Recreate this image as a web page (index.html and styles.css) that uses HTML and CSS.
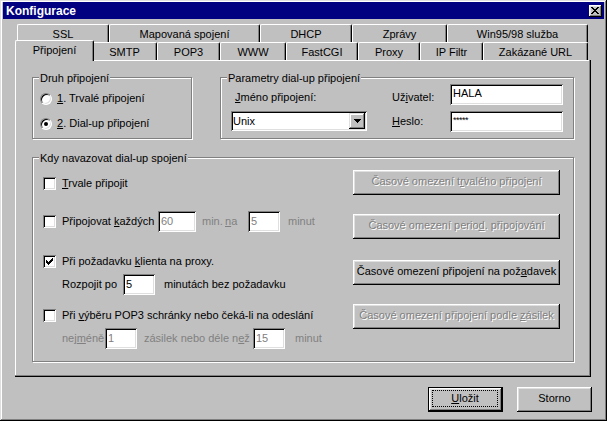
FILE: index.html
```html
<!DOCTYPE html>
<html lang="cs">
<head>
<meta charset="utf-8">
<title>Konfigurace</title>
<link rel="stylesheet" href="styles.css">
</head>
<body>
<div class="window">
  <div class="titlebar">
    <span class="title-text">Konfigurace</span>
    <span class="close-btn" aria-label="Zavřít">
      <svg width="8" height="7" viewBox="0 0 8 7" shape-rendering="crispEdges"><path fill="#000" d="M0 0h2v1H0z M6 0h2v1H6z M1 1h2v1H1z M5 1h2v1H5z M2 2h4v1H2z M3 3h2v1H3z M2 4h4v1H2z M1 5h2v1H1z M5 5h2v1H5z M0 6h2v1H0z M6 6h2v1H6z"/></svg>
    </span>
  </div>

  <div class="tabs">
    <div class="tab-row">
      <div class="tab tab-ssl">SSL</div>
      <div class="tab tab-map">Mapovaná spojení</div>
      <div class="tab tab-dhcp">DHCP</div>
      <div class="tab tab-zpravy">Zprávy</div>
      <div class="tab tab-win">Win95/98 služba</div>
    </div>
    <div class="tab-row">
      <div class="tab selected tab-prip">Připojení</div>
      <div class="tab tab-smtp">SMTP</div>
      <div class="tab tab-pop3">POP3</div>
      <div class="tab tab-www">WWW</div>
      <div class="tab tab-fcgi">FastCGI</div>
      <div class="tab tab-proxy">Proxy</div>
      <div class="tab tab-ip">IP Filtr</div>
      <div class="tab tab-url">Zakázané URL</div>
    </div>
  </div>

  <div class="panel">
    <div class="top-groups">
      <div class="group g-druh">
        <div class="group-title">Druh připojení</div>
        <div class="radio-list">
          <div class="radio-row"><span class="radio"></span><span><u>1</u>. Trvalé připojení</span></div>
          <div class="radio-row"><span class="radio checked"><span class="dot"></span></span><span><u>2</u>. Dial-up připojení</span></div>
        </div>
      </div>
      <div class="group g-param">
        <div class="group-title">Parametry dial-up připojení</div>
        <div class="param-grid">
          <div class="lbl lbl-jmeno"><u>J</u>méno připojení:</div>
          <div class="lbl lbl-uziv">Už<u>i</u>vatel:</div>
          <div class="field f-user">HALA</div>
          <div class="combo">
            <span class="combo-text">Unix</span>
            <span class="combo-btn"><svg width="7" height="4" viewBox="0 0 7 4" shape-rendering="crispEdges"><path fill="#000" d="M0 0h7v1H0z M1 1h5v1H1z M2 2h3v1H2z M3 3h1v1H3z"/></svg></span>
          </div>
          <div class="lbl lbl-heslo"><u>H</u>eslo:</div>
          <div class="field f-pass"><span class="stars">*****</span></div>
        </div>
      </div>
    </div>

    <div class="group g-kdy">
      <div class="group-title">Kdy navazovat dial-up spojení</div>
      <div class="kdy-body">
        <div class="kdy-left">
          <div class="row row-a"><span class="check"></span><span><u>T</u>rvale připojit</span></div>
          <div class="row row-b">
            <span class="check"></span>
            <span class="w-pripojovat">Připojovat <u>k</u>aždých</span>
            <span class="field sm disabled w-38">60</span>
            <span class="dis w-min">min.</span>
            <span class="dis w-na"><u>n</u>a</span>
            <span class="field sm disabled w-32">5</span>
            <span class="dis ml-8">minut</span>
          </div>
          <div class="row row-c"><span class="check"><svg width="13" height="13" viewBox="0 0 13 13" shape-rendering="crispEdges"><path fill="#000" d="M9 3h1v1H9z M8 4h2v1H8z M3 5h1v1H3z M7 5h3v1H7z M3 6h2v1H3z M6 6h3v1H6z M3 7h5v1H3z M4 8h3v1H4z M5 9h1v1H5z"/></svg></span><span>Při požadavku <u>k</u>lienta na proxy.</span></div>
          <div class="row row-d indent">
            <span class="w-rozpojit">Rozpojit po</span>
            <span class="field sm w-32">5</span>
            <span class="ml-9">minutách bez požadavku</span>
          </div>
          <div class="row row-e"><span class="check"></span><span>Při <u>v</u>ýběru POP3 schránky nebo čeká-li na odeslání</span></div>
          <div class="row row-f indent">
            <span class="dis w-nejmene">nej<u>m</u>éně</span>
            <span class="field sm disabled w-32">1</span>
            <span class="dis ml-7 w-zasilek">zásilek nebo déle n<u>e</u>ž</span>
            <span class="field sm disabled w-32">15</span>
            <span class="dis ml-10">minut</span>
          </div>
        </div>
        <div class="kdy-right">
          <div class="btn btn-wide disabled b1"><span>Časové omezení t<u>r</u>valého připojení</span></div>
          <div class="btn btn-wide disabled b2"><span>Časové omezení perio<u>d</u>. připojování</span></div>
          <div class="btn btn-wide b3"><span>Časové omezení připojení na pož<u>a</u>davek</span></div>
          <div class="btn btn-wide disabled b4"><span>Časové omezení připojení podle <u>z</u>ásilek</span></div>
        </div>
      </div>
    </div>
  </div>

  <div class="footer">
    <div class="btn btn-default"><span class="focus"><span><u>U</u>ložit</span></span></div>
    <div class="btn btn-std"><span>Storno</span></div>
  </div>
</div>
</body>
</html>
```
FILE: styles.css
```css
* { box-sizing: border-box; }

html, body {
  margin: 0;
  padding: 0;
}

body {
  width: 607px;
  height: 421px;
  overflow: hidden;
  background: #c0c0c0;
  font-family: "Liberation Sans", Arial, sans-serif;
  font-size: 11px;
  line-height: 13px;
  color: #000;
}

u { text-decoration: underline; text-underline-offset: 1px; }

.window {
  width: 607px;
  height: 421px;
  background: #c0c0c0;
  padding: 2px 3px;
  display: flex;
  flex-direction: column;
  box-shadow: inset -1px -1px #000, inset 1px 1px #dfdfdf, inset -2px -2px #808080, inset 2px 2px #fff;
}

/* title bar */
.titlebar {
  height: 17px;
  flex: none;
  background: #000080;
  color: #fff;
  display: flex;
  align-items: center;
  padding: 0 2px 0 3px;
}

.title-text {
  flex: 1;
  font-weight: bold;
  font-size: 12px;
  line-height: 15px;
  margin-top: 2px;
}

.close-btn {
  width: 13px;
  height: 12px;
  background: #c0c0c0;
  display: flex;
  align-items: center;
  justify-content: center;
  padding: 0 1px 1px 0;
  box-shadow: inset -1px -1px #000, inset 1px 1px #fff, inset -2px -2px #808080, inset 2px 2px #dfdfdf;
}

.close-btn svg { display: block; }

/* tabs */
.tabs {
  margin: 5px 0 0 14px;
  width: 571px;
  flex: none;
}

.tab-row {
  display: flex;
  height: 18px;
}

.tab {
  flex: none;
  height: 18px;
  padding-top: 3px;
  text-align: center;
  white-space: nowrap;
  background: #c0c0c0;
  border-top: 1px solid #fff;
  border-left: 1px solid #fff;
  border-right: 1px solid #000;
  border-radius: 2px 2px 0 0;
  box-shadow: inset -1px 0 #808080;
}

.tab.selected {
  height: 21px;
  margin: -2px -2px 0 -2px;
  position: relative;
  z-index: 2;
}

.tab-ssl { width: 92px; }
.tab-map { width: 151px; }
.tab-dhcp { width: 92px; }
.tab-zpravy { width: 95px; }
.tab-win { width: 141px; }

.tab-prip { width: 79px; }
.tab-smtp { width: 65px; }
.tab-pop3 { width: 63px; }
.tab-www { width: 66px; }
.tab-fcgi { width: 72px; }
.tab-proxy { width: 62px; }
.tab-ip { width: 63px; }
.tab-url { width: 105px; }

/* panel */
.panel {
  flex: none;
  margin-left: 12px;
  width: 576px;
  height: 317px;
  padding: 17px 0 0 17px;
  box-shadow: inset -1px -1px #000, inset -2px -2px #808080, inset 1px 1px #fff;
}

.top-groups {
  display: flex;
  gap: 28px;
}

.group {
  border: 1px solid #808080;
  box-shadow: 1px 1px 0 #fff, inset 1px 1px 0 #fff;
}

.g-druh { width: 160px; height: 62px; }
.g-param { width: 354px; height: 62px; }
.g-kdy { width: 542px; height: 205px; margin-top: 18px; }

.group-title {
  display: block;
  width: max-content;
  margin: -6px 0 0 6px;
  padding: 0 1px;
  background: #c0c0c0;
  line-height: 13px;
  white-space: nowrap;
}

/* radio group */
.radio-list {
  margin-top: 7px;
  padding-left: 7px;
  display: flex;
  flex-direction: column;
  gap: 12px;
}

.radio-row {
  display: flex;
  align-items: center;
  height: 13px;
  white-space: nowrap;
}

.radio {
  width: 12px;
  height: 12px;
  margin-right: 5px;
  border-radius: 50%;
  background: #fff;
  border: 1px solid;
  border-color: #808080 #fff #fff #808080;
  box-shadow: inset 1px 1px #000, inset -1px -1px #dfdfdf;
  display: flex;
  align-items: center;
  justify-content: center;
}

.radio .dot {
  width: 4px;
  height: 4px;
  border-radius: 50%;
  background: #000;
}

/* dial-up params */
.param-grid {
  margin-top: -1px;
  padding-left: 10px;
  display: grid;
  grid-template-columns: 136px 25px 58px 113px;
  grid-template-rows: 21px 21px;
  row-gap: 6px;
}

.lbl { white-space: nowrap; }
.lbl-jmeno { grid-column: 1; grid-row: 1; align-self: end; margin: 0 0 1px 4px; }
.lbl-uziv { grid-column: 3; grid-row: 1; align-self: end; margin-bottom: 1px; }
.f-user { grid-column: 4; grid-row: 1; }
.combo { grid-column: 1; grid-row: 2; }
.lbl-heslo { grid-column: 3; grid-row: 2; align-self: center; }
.f-pass { grid-column: 4; grid-row: 2; }

.field {
  display: block;
  height: 21px;
  background: #fff;
  padding: 3px 0 0 3px;
  white-space: nowrap;
  box-shadow: inset 1px 1px #808080, inset -1px -1px #fff, inset 2px 2px #000, inset -2px -2px #dfdfdf;
}

.field.sm { padding-top: 4px; flex: none; }
.field.disabled { color: #808080; }

.stars { font-size: 9px; letter-spacing: -0.5px; vertical-align: 2px; }

.combo {
  height: 20px;
  align-self: start;
  display: flex;
  padding: 2px;
  background: #fff;
  box-shadow: inset 1px 1px #808080, inset -1px -1px #fff, inset 2px 2px #000, inset -2px -2px #dfdfdf;
}

.combo-text {
  flex: 1;
  padding: 2px 0 0 0;
}

.combo-btn {
  width: 16px;
  height: 16px;
  background: #c0c0c0;
  display: flex;
  align-items: center;
  justify-content: center;
  box-shadow: inset -1px -1px #000, inset 1px 1px #dfdfdf, inset -2px -2px #808080, inset 2px 2px #fff;
}

.combo-btn svg { display: block; }

/* when to connect */
.kdy-body {
  display: flex;
}

.kdy-left {
  flex: 1;
  padding-left: 10px;
  display: flex;
  flex-direction: column;
}

.row {
  display: flex;
  align-items: center;
  height: 21px;
  white-space: nowrap;
}

.row-a { margin-top: 8px; }
.row-b { margin-top: 17px; }
.row-c { margin-top: 19px; }
.row-d { margin-top: 2px; }
.row-e { margin-top: 10px; }
.row-f { margin-top: 2px; }

.indent { padding-left: 19px; }

.check {
  flex: none;
  width: 13px;
  height: 13px;
  margin-right: 6px;
  background: #fff;
  box-shadow: inset 1px 1px #808080, inset -1px -1px #fff, inset 2px 2px #000, inset -2px -2px #dfdfdf;
}

.check svg { display: block; }

.dis { color: #808080; }

.w-pripojovat { width: 96px; flex: none; }
.w-38 { width: 38px; }
.w-32 { width: 32px; }
.w-min { width: 23px; margin-left: 6px; flex: none; }
.w-na { width: 23px; flex: none; }
.w-rozpojit { width: 61px; flex: none; }
.w-nejmene { width: 43px; flex: none; }
.w-zasilek { width: 109px; flex: none; }
.ml-7 { margin-left: 7px; }
.ml-8 { margin-left: 8px; }
.ml-9 { margin-left: 9px; }
.ml-10 { margin-left: 10px; }

.kdy-right {
  width: 207px;
  margin-right: 13px;
  display: flex;
  flex-direction: column;
}

/* buttons */
.btn {
  display: flex;
  align-items: center;
  justify-content: center;
  white-space: nowrap;
  background: #c0c0c0;
  padding-bottom: 2px;
  box-shadow: inset -1px -1px #000, inset 1px 1px #fff, inset -2px -2px #808080, inset 2px 2px #dfdfdf;
}

.btn.disabled {
  color: #808080;
  text-shadow: 1px 1px 0 #fff;
}

.btn-wide { width: 207px; height: 25px; }
.b1 { margin-top: 5px; }
.b2 { margin-top: 19px; }
.b3 { margin-top: 21px; }
.b4 { margin-top: 19px; }

.footer {
  flex: none;
  display: flex;
  justify-content: flex-end;
  gap: 14px;
  margin-top: 10px;
  padding-right: 12px;
}

.btn-std { width: 75px; height: 25px; }

.btn-default {
  width: 75px;
  height: 25px;
  padding: 3px 5px 5px 4px;
  align-items: stretch;
  box-shadow: inset 0 0 0 1px #000, inset -2px -2px #000, inset 2px 2px #fff, inset -3px -3px #808080, inset 3px 3px #dfdfdf;
}

.focus {
  flex: 1;
  display: flex;
  align-items: center;
  justify-content: center;
  border: 1px dotted #000;
}
```
